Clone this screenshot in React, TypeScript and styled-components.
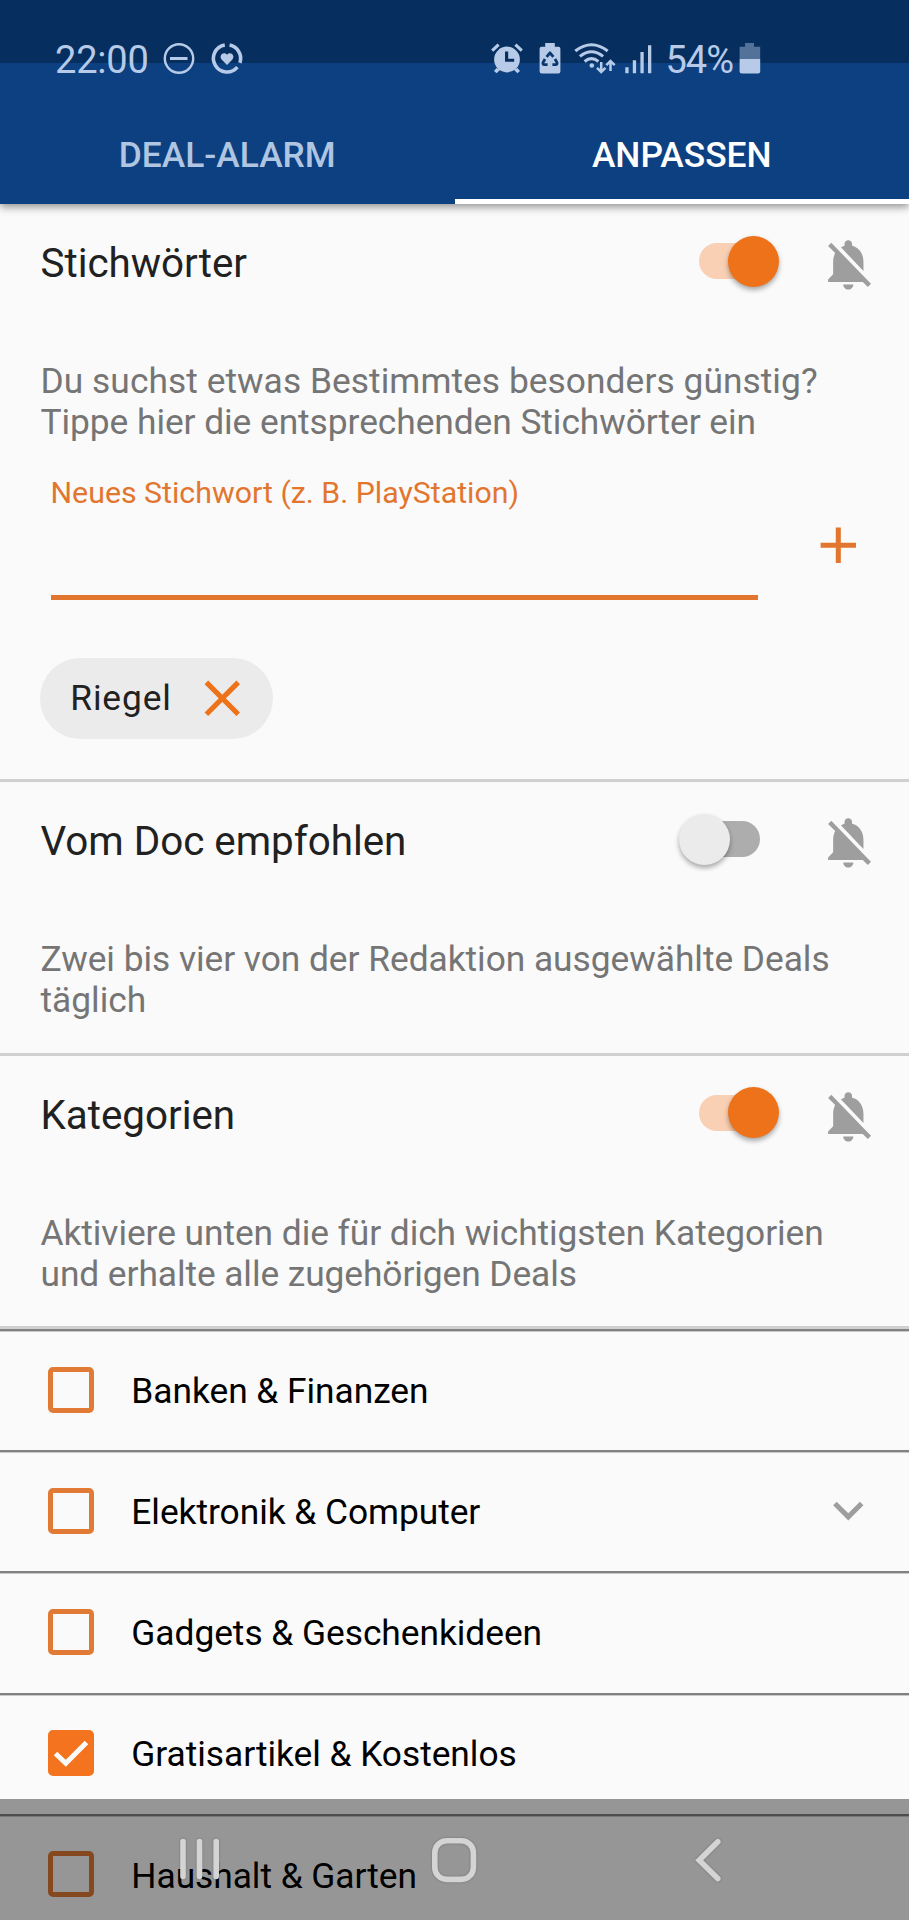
import React from "react";
import styled, { createGlobalStyle } from "styled-components";

const ORANGE = "#ee7219";
const STATUS = "#b7cbe8";

const GlobalStyle = createGlobalStyle`
  * { box-sizing: border-box; }
  body { margin: 0; background: #fafafa; }
`;

const Screen = styled.div`
  position: relative;
  width: 909px;
  height: 1920px;
  overflow: hidden;
  background: #fafafa;
  font-family: Roboto, sans-serif;
  font-size: 35.35px;
  line-height: 41.4px;
  color: #000;
`;

const Header = styled.header`
  position: relative;
  height: 204px;
  background: linear-gradient(#062f5f 0 63px, #0c4080 63px);
  box-shadow: 0 3px 8px rgba(0, 0, 0, 0.42);
`;

const StatusBar = styled.div`
  display: flex;
  height: 104px;
  padding: 42px 148px 0 55px;
  justify-content: space-between;
  color: ${STATUS};
  font-size: 38px;
  line-height: 36px;
`;

const StatusGroup = styled.div`
  display: flex;
  align-items: flex-start;
`;

const StatusText = styled.span<{ $width: number; $indent?: number }>`
  width: ${(p) => p.$width}px;
  padding-left: ${(p) => p.$indent ?? 0}px;
  letter-spacing: ${(p) => (p.$indent ? -1 : -0.2)}px;
  white-space: nowrap;
`;

const StatusIcon = styled.svg<{ $gap?: number }>`
  display: block;
  height: 32px;
  margin-left: ${(p) => p.$gap ?? 0}px;
  fill: ${STATUS};
  overflow: visible;
`;

const Tabs = styled.nav`
  display: flex;
  height: 100px;
`;

const Tab = styled.div<{ $active?: boolean }>`
  flex: 1;
  display: flex;
  align-items: center;
  justify-content: center;
  padding-top: ${(p) => (p.$active ? 8 : 3)}px;
  border-bottom: ${(p) => (p.$active ? "5px solid #fff" : "none")};
  color: ${(p) => (p.$active ? "#fff" : "#b0c5e2")};
  font-weight: 500;
`;

const Section = styled.section<{ $height: number }>`
  height: ${(p) => p.$height}px;
  border-bottom: 3px solid #d0d0d0;
`;

const TitleRow = styled.div`
  display: flex;
  align-items: center;
  height: 118px;
  padding: 0 30px 0 40.5px;
`;

const Title = styled.h2`
  flex: 1;
  margin: 0;
  padding-top: 1px;
  font-size: 40.4px;
  line-height: 47px;
  font-weight: 400;
  letter-spacing: -0.03px;
  color: #212121;
`;

const Track = styled.div<{ $on: boolean }>`
  display: flex;
  align-items: center;
  justify-content: ${(p) => (p.$on ? "flex-end" : "flex-start")};
  width: 76px;
  height: 36px;
  margin: 0 ${(p) => (p.$on ? 43.5 : 58.5)}px 4px 0;
  border-radius: 18px;
  background: ${(p) => (p.$on ? "#fad0b4" : "#adadad")};
`;

const Thumb = styled.div<{ $on: boolean }>`
  flex: none;
  width: 51px;
  height: 51px;
  margin: 0 -4.5px;
  border-radius: 50%;
  background: ${(p) => (p.$on ? ORANGE : "#ebebeb")};
  box-shadow: 0 3px 5px rgba(0, 0, 0, 0.33);
`;

const BellSvg = styled.svg`
  width: 60.6px;
  height: 60.6px;
  margin-top: 3px;
  fill: #9e9e9e;
`;

const Description = styled.p`
  margin: 39px 30px 0 40.5px;
  color: #757575;
`;

const Line = styled.span<{ $tracking: number }>`
  display: block;
  letter-spacing: ${(p) => p.$tracking}px;
  white-space: nowrap;
`;

const FieldRow = styled.div`
  display: flex;
  align-items: center;
  justify-content: space-between;
  height: 126px;
  margin: 30.2px 40px 0 50.5px;
`;

const Field = styled.label`
  width: 707px;
  height: 126px;
  padding-top: 1.2px;
  border-bottom: 5px solid #e2762f;
  color: #e2762f;
  font-size: 30.3px;
  line-height: 35.5px;
`;

const StrokeIcon = styled.svg`
  width: 60.6px;
  height: 60.6px;
  fill: none;
  stroke: #e2762f;
  stroke-width: 2;
`;

const PlusIcon = styled(StrokeIcon)`
  margin: 17px 0 0;
`;

const Chip = styled.div`
  display: inline-flex;
  align-items: center;
  width: 233px;
  height: 81px;
  margin: 57.5px 0 0 40px;
  padding-left: 30.3px;
  border-radius: 40.5px;
  background: #ebebeb;
  color: #212121;
  letter-spacing: 0.85px;
`;

const ChipLabel = styled.span`
  padding-top: 1px;
`;

const ChipIcon = styled(StrokeIcon)`
  margin-left: 20px;
  stroke: ${ORANGE};
`;

const Row = styled.div`
  display: flex;
  align-items: center;
  height: 121.2px;
  padding: 0 30px 0 48px;
  border-top: 2px solid #818181;
  box-shadow: inset 0 1px #c8c8c8;
`;

const Box = styled.span<{ $checked?: boolean }>`
  width: 46px;
  height: 46px;
  margin-bottom: 2px;
  border: 5px solid ${(p) => (p.$checked ? "#f4731f" : "#e07a35")};
  border-radius: 5px;
  background: ${(p) => (p.$checked ? "#f4731f" : "transparent")};
`;

const CheckSvg = styled.svg`
  display: block;
  width: 36px;
  height: 36px;
  fill: none;
  stroke: #fafafa;
  stroke-width: 5;
`;

const RowLabel = styled.span`
  flex: 1;
  margin: 2px 0 0 37.3px;
  letter-spacing: -0.04px;
`;

const Chevron = styled.svg`
  width: 60.6px;
  height: 60.6px;
  margin-bottom: 2px;
  fill: #9e9e9e;
`;

const NavBar = styled.nav`
  position: absolute;
  left: 0;
  right: 0;
  bottom: 0;
  height: 121px;
  display: flex;
  align-items: center;
  padding: 1px 0 0 178px;
  background: rgba(0, 0, 0, 0.4);
`;

const NavIcon = styled.svg<{ $gap?: number }>`
  height: 46px;
  margin-left: ${(p) => p.$gap ?? 0}px;
  fill: none;
  stroke: #d4d4d4;
  stroke-width: 5.6;
  stroke-linecap: round;
  filter: drop-shadow(0 0 1px rgba(0, 0, 0, 0.25));
`;

function SwitchControl({ on }: { on: boolean }) {
  return (
    <Track $on={on}>
      <Thumb $on={on} />
    </Track>
  );
}

function BellOff() {
  return (
    <BellSvg viewBox="0 0 24 24">
      <path d="M20 18.69L7.84 6.14 5.27 3.49 4 4.76l2.8 2.8v.01c-.52.99-.8 2.16-.8 3.42v5l-2 2v1h13.73l2 2L21 19.72l-1-1.03zM12 22c1.11 0 2-.89 2-2h-4c0 1.11.89 2 2 2zm6-7.32V11c0-3.08-1.64-5.64-4.5-6.32V4c0-.83-.67-1.5-1.5-1.5s-1.5.67-1.5 1.5v.68c-.15.03-.29.08-.42.12-.1.03-.2.07-.3.11h-.01c-.01 0-.01 0-.02.01-.23.09-.46.2-.68.31 0 0-.01 0-.01.01L18 14.68z" />
    </BellSvg>
  );
}

function SectionTitle({ children, on }: { children: string; on: boolean }) {
  return (
    <TitleRow>
      <Title>{children}</Title>
      <SwitchControl on={on} />
      <BellOff />
    </TitleRow>
  );
}

const categories = [
  { name: "Banken & Finanzen" },
  { name: "Elektronik & Computer", expandable: true },
  { name: "Gadgets & Geschenkideen" },
  { name: "Gratisartikel & Kostenlos", checked: true },
  { name: "Haushalt & Garten" },
];

export default function App() {
  return (
    <Screen>
      <GlobalStyle />
      <Header>
        <StatusBar>
          <StatusGroup>
            <StatusText $width={96}>22:00</StatusText>
            <StatusIcon $gap={12} width="32" viewBox="0 0 32 32">
              <circle cx="16" cy="16.5" r="14.2" fill="none" stroke={STATUS} strokeWidth="2.4" />
              <rect x="7" y="15" width="17.5" height="3" />
            </StatusIcon>
            <StatusIcon $gap={16} width="32" viewBox="0 0 32 32">
              <g fill="none" stroke={STATUS} strokeWidth="3.6">
                <path d="M18.6 3.1A13.6 13.6 0 0 1 28.9 20.8" />
                <path d="M26.4 25.2A13.6 13.6 0 1 1 13.8 3" />
              </g>
              <path d="M16 23l-5.2-5.2c-3.6-3.8 1.6-9 5.2-5 3.6-4 8.8 1.2 5.2 5z" />
            </StatusIcon>
          </StatusGroup>
          <StatusGroup>
            <StatusIcon width="32" viewBox="0 0 32 32">
              <path d="M5.5 26L3 29l2.6 2.2 3.6-3.4zM26.5 26l2.5 3-2.6 2.2-3.6-3.4z" />
              <path d="M1.2 8.6L7.6 2.6M30.8 8.6l-6.4-6" stroke={STATUS} strokeWidth="3.2" />
              <path fillRule="evenodd" d="M16 4.6a12.9 12.9 0 1 0 0 25.8 12.9 12.9 0 0 0 0-25.8zM14 9.5h3.2v7.3h6v3H14z" />
            </StatusIcon>
            <StatusIcon $gap={15.5} width="22" viewBox="0 0 22 32">
              <path d="M6.2 1h9.6v3.7h3.6q2 0 2 2v22.7q0 2-2 2H2.6q-2 0-2-2V6.7q0-2 2-2h3.6z" />
              <g fill="none" stroke="#0b376f" strokeWidth="2.8" strokeLinejoin="round">
                <path d="M7.6 14.8L11 10.8l3.4 4" />
                <path d="M6 17l-2 3.6q-.4 2 1.4 2h3.2" />
                <path d="M16 17l2 3.6q.4 2-1.4 2h-3.2" />
              </g>
              <path d="M11 25v-8.3M8.4 19.2l2.6-2.7 2.6 2.7" stroke={STATUS} strokeWidth="1.8" fill="none" />
            </StatusIcon>
            <StatusIcon $gap={13.5} width="41" viewBox="0 0 41 32">
              <g fill="none" stroke={STATUS} strokeWidth="3">
                <path d="M1.3 9Q17.5-3.6 33.7 9" />
                <path d="M5.9 14.4Q17.5 5 29.1 14.4" />
                <path d="M10.6 19.5Q17.5 13.7 24.4 19.5" />
                <path d="M27.2 20v10M23 25.8l4.2 4.2 4.2-4.2M36.5 29V19M32.3 23.2l4.2-4.2 4.2 4.2" strokeWidth="2.5" />
              </g>
              <circle cx="17.8" cy="23.5" r="2.3" />
            </StatusIcon>
            <StatusIcon $gap={10} width="28" viewBox="0 0 28 32">
              <path d="M.3 25.3h3.3v6H.3zM7.8 18.2h3.3v13.1H7.8zM15.4 10h3.3v21.3h-3.3zM23 3.2h3.3v28.1H23z" />
            </StatusIcon>
            <StatusText $width={86} $indent={12.5}>54%</StatusText>
            <StatusIcon width="22" viewBox="0 0 22 32">
              <path d="M6 1h9v3.7h6.2V17H.6V4.7H6z" opacity="0.43" />
              <path d="M.6 17h20.6v12.4q0 2-2 2H2.6q-2 0-2-2z" />
            </StatusIcon>
          </StatusGroup>
        </StatusBar>
        <Tabs>
          <Tab>DEAL-ALARM</Tab>
          <Tab $active>ANPASSEN</Tab>
        </Tabs>
      </Header>

      <Section $height={578}>
        <SectionTitle on>Stichwörter</SectionTitle>
        <Description>
          <Line $tracking={0.05}>Du suchst etwas Bestimmtes besonders günstig?</Line>
          <Line $tracking={-0.06}>Tippe hier die entsprechenden Stichwörter ein</Line>
        </Description>
        <FieldRow>
          <Field>Neues Stichwort (z. B. PlayStation)</Field>
          <PlusIcon viewBox="0 0 24 24">
            <path d="M12 5v14M5 12h14" />
          </PlusIcon>
        </FieldRow>
        <Chip>
          <ChipLabel>Riegel</ChipLabel>
          <ChipIcon viewBox="0 0 24 24">
            <path d="M5.7 5.7l12.6 12.6M18.3 5.7L5.7 18.3" />
          </ChipIcon>
        </Chip>
      </Section>

      <Section $height={273.5}>
        <SectionTitle on={false}>Vom Doc empfohlen</SectionTitle>
        <Description>
          <Line $tracking={-0.04}>Zwei bis vier von der Redaktion ausgewählte Deals</Line>
          <Line $tracking={0}>täglich</Line>
        </Description>
      </Section>

      <Section $height={273.5}>
        <SectionTitle on>Kategorien</SectionTitle>
        <Description>
          <Line $tracking={-0.06}>Aktiviere unten die für dich wichtigsten Kategorien</Line>
          <Line $tracking={-0.08}>und erhalte alle zugehörigen Deals</Line>
        </Description>
      </Section>

      {categories.map((c) => (
        <Row key={c.name}>
          <Box $checked={c.checked}>
            {c.checked && (
              <CheckSvg viewBox="0 0 36 36">
                <path d="M2.5 18.5L12.8 28.3 33.5 7.5" />
              </CheckSvg>
            )}
          </Box>
          <RowLabel>{c.name}</RowLabel>
          {c.expandable && (
            <Chevron viewBox="0 0 24 24">
              <path d="M7.41 8.59L12 13.17l4.59-4.58L18 10l-6 6-6-6z" />
            </Chevron>
          )}
        </Row>
      ))}

      <NavBar>
        <NavIcon width="44" viewBox="0 0 44 46">
          <path d="M5 4.5v35M21.5 4.5v35M38.2 4.5v35" />
        </NavIcon>
        <NavIcon $gap={209} width="46" viewBox="0 0 46 46">
          <rect x="3.8" y="3.8" width="38.6" height="38.6" rx="12" />
        </NavIcon>
        <NavIcon $gap={218} width="28" viewBox="0 0 28 46">
          <path d="M22.8 4.8L4.2 23.3l18.6 18.2" />
        </NavIcon>
      </NavBar>
    </Screen>
  );
}
